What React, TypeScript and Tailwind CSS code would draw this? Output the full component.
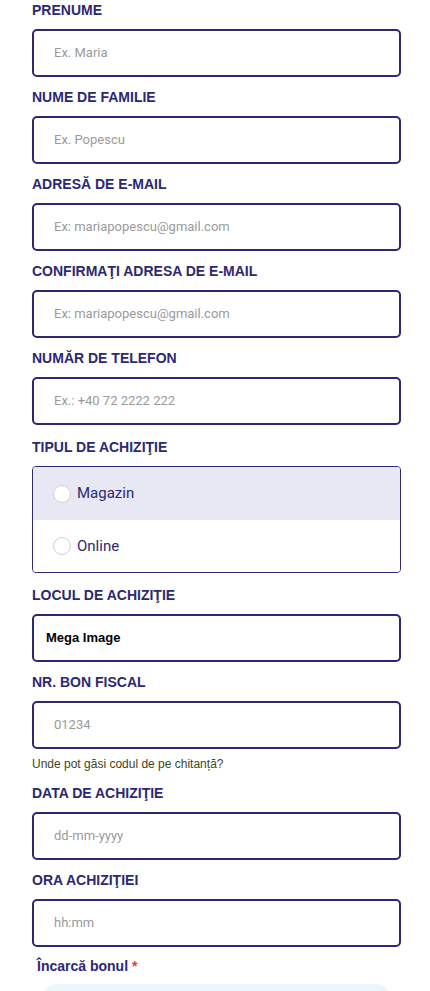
import React from "react";

const labelCls =
  "block text-[14px] leading-[20px] font-bold text-[#2c2872] uppercase mb-[9px]";
const inputCls =
  "h-[48px] w-full rounded-[5px] border-2 border-[#2c2872] bg-white flex items-center pl-[20px] text-[13px] text-[#9a9a9a]";

function Field({ label, placeholder }: { label: string; placeholder: string }) {
  return (
    <div className="mb-[10px]">
      <div className={labelCls} style={{ fontFamily: '"Liberation Sans", Arial, sans-serif' }}>
        {label}
      </div>
      <div className={inputCls} style={{ fontFamily: 'Roboto, "Liberation Sans", sans-serif' }}>
        {placeholder}
      </div>
    </div>
  );
}

export default function App() {
  const arial = { fontFamily: '"Liberation Sans", Arial, sans-serif' };
  const roboto = { fontFamily: 'Roboto, "Liberation Sans", sans-serif' };
  return (
    <div className="w-[430px] h-[991px] overflow-hidden bg-white">
      <div className="pl-[32px] pr-[29px]">
        <Field label="Prenume" placeholder="Ex. Maria" />
        <Field label="Nume de familie" placeholder="Ex. Popescu" />
        <Field label="Adresă de e-mail" placeholder="Ex: mariapopescu@gmail.com" />
        <Field label="Confirmaţi adresa de e-mail" placeholder="Ex: mariapopescu@gmail.com" />
        <Field label="Număr de telefon" placeholder="Ex.: +40 72 2222 222" />

        <div className="pt-[2px] mb-[12px]">
          <div className={labelCls} style={arial}>
            Tipul de achiziţie
          </div>
          <div className="h-[107px] w-full rounded-[4px] border border-[#2c2872] overflow-hidden flex flex-col">
            <div className="h-[53px] bg-[#e8e8f4] flex items-center pl-[20px] gap-[6px]">
              <span className="w-[18px] h-[18px] rounded-full bg-white border border-[#d0d0d0]" />
              <span className="text-[15px] text-[#2c2872]" style={roboto}>
                Magazin
              </span>
            </div>
            <div className="flex-1 bg-white flex items-center pl-[20px] gap-[6px]">
              <span className="w-[18px] h-[18px] rounded-full bg-white border border-[#d0d0d0]" />
              <span className="text-[15px] text-[#2c2872]" style={roboto}>
                Online
              </span>
            </div>
          </div>
        </div>

        <div className="mb-[10px]">
          <div className={labelCls} style={arial}>
            Locul de achiziţie
          </div>
          <div
            className="h-[48px] w-full rounded-[5px] border-2 border-[#2c2872] bg-white flex items-center pl-[12px] text-[13px] font-bold text-black"
            style={arial}
          >
            Mega Image
          </div>
        </div>

        <div className="mb-[11px]">
          <div className={labelCls} style={arial}>
            Nr. bon fiscal
          </div>
          <div className={inputCls} style={roboto}>
            01234
          </div>
          <div className="mt-[7px] text-[12px] leading-[16px] text-[#3d4620]" style={arial}>
            Unde pot găsi codul de pe chitanță?
          </div>
        </div>

        <Field label="Data de achiziţie" placeholder="dd-mm-yyyy" />
        <div>
          <div className={labelCls} style={arial}>
            Ora achiziţiei
          </div>
          <div className={inputCls} style={roboto}>
            hh:mm
          </div>
        </div>

        <div className="mt-[9px] pl-[5px] text-[14px] leading-[20px] font-bold text-[#2c2872]" style={arial}>
          Încarcă bonul <span className="text-[#e53935]">*</span>
        </div>
        <div className="mt-[8px] ml-[11px] mr-[11px] h-[60px] rounded-[14px] bg-[#e9f7fc]" />
      </div>
    </div>
  );
}
